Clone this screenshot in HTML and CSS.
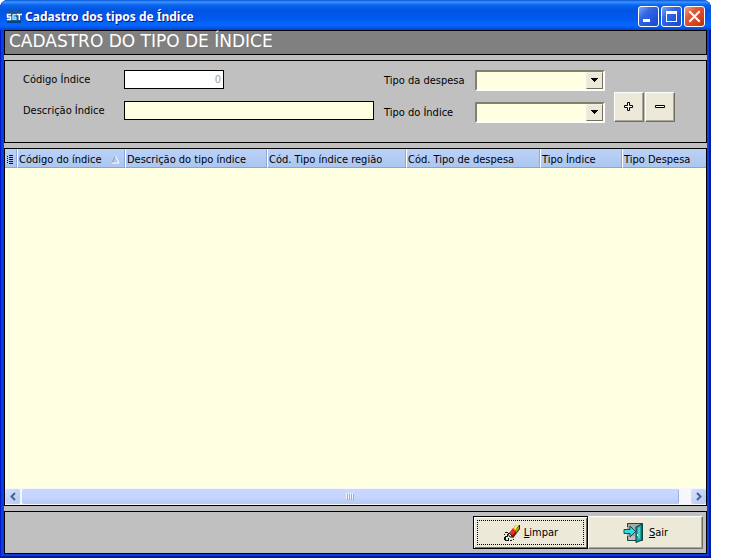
FILE: index.html
```html
<!DOCTYPE html>
<html lang="pt-BR">
  <head>
    <meta charset="UTF-8" />
    <meta name="viewport" content="width=device-width, initial-scale=1.0" />
    <title>Cadastro dos tipos de Índice</title>
    <link rel="stylesheet" href="styles.css" />
  </head>
  <body>
    <div class="window">
      <header class="titlebar">
        <svg class="app-icon" width="16" height="16" viewBox="0 0 16 16">
          <rect x="1" y="1" width="14" height="13" fill="#15579c" />
          <path d="M1 12h14v2H1z" fill="#0b3f86" />
          <path d="M8 4.500l2 2v3l-2 1.500l-2-1.500v-3z" fill="#4bb4ea" />
          <path d="M5 5.500H1.500v2.500H4.500v2.500H1" fill="none" stroke="#fff" stroke-width="1.500" />
          <path d="M10 5.500H7v5h3V8.500H8.500" fill="none" stroke="#b9e2fa" stroke-width="1.200" />
          <path d="M10.500 5.500H16M13.300 5.500V11" fill="none" stroke="#fff" stroke-width="1.500" />
        </svg>
        <h1>Cadastro dos tipos de Índice</h1>
        <div class="window-controls">
          <button type="button" class="control" aria-label="Minimizar">
            <svg width="19" height="19" viewBox="0 0 19 19">
              <path d="M4 12h7v3H4z" fill="#fff" />
            </svg>
          </button>
          <button type="button" class="control" aria-label="Maximizar">
            <svg width="19" height="19" viewBox="0 0 19 19">
              <path d="M4 4h11v11H4zM5 7v7h9V7z" fill="#fff" fill-rule="evenodd" />
            </svg>
          </button>
          <button type="button" class="control control-close" aria-label="Fechar">
            <svg width="19" height="19" viewBox="0 0 19 19">
              <path d="M5 5l9 9M14 5l-9 9" stroke="#fff" stroke-width="2" stroke-linecap="square" />
            </svg>
          </button>
        </div>
      </header>

      <main class="client">
        <h2 class="banner">CADASTRO DO TIPO DE ÍNDICE</h2>

        <form class="panel form-panel">
          <div class="fields">
            <label for="codigo">Código Índice</label>
            <input type="text" id="codigo" class="field field-code" value="0" readonly />
            <label for="descricao">Descrição Índice</label>
            <input type="text" id="descricao" class="field" />
          </div>
          <div class="combos">
            <label for="despesa">Tipo da despesa</label>
            <div class="combo">
              <select id="despesa">
                <option></option>
              </select>
              <span class="combo-arrow">
                <svg width="9" height="5" viewBox="0 0 9 5">
                  <path d="M1 0h7v1H7v1H6v1H5v1H4V3H3V2H2V1H1z" />
                </svg>
              </span>
            </div>
            <label for="tipo">Tipo do Índice</label>
            <div class="combo">
              <select id="tipo">
                <option></option>
              </select>
              <span class="combo-arrow">
                <svg width="9" height="5" viewBox="0 0 9 5">
                  <path d="M1 0h7v1H7v1H6v1H5v1H4V3H3V2H2V1H1z" />
                </svg>
              </span>
            </div>
          </div>
          <div class="row-actions">
            <button type="button" class="btn btn-square" aria-label="Adicionar">
              <svg width="10" height="10" viewBox="0 0 10 10">
                <path d="M3.500 .5h2v3h3v2h-3v3h-2v-3h-3v-2h3z" fill="#fff" stroke="#000" />
              </svg>
            </button>
            <button type="button" class="btn btn-square" aria-label="Remover">
              <svg width="10" height="10" viewBox="0 0 10 10">
                <path d="M.5 3.500h9v2H.5z" fill="#fff" stroke="#000" />
              </svg>
            </button>
          </div>
        </form>

        <section class="panel grid-panel">
          <table class="grid">
            <thead>
              <tr>
                <th class="col-marker">
                  <svg width="8" height="10" viewBox="0 0 8 10">
                    <path d="M1 1.500h1M3 .5h4M1 3.500h1M3 2.500h4M3 4.500h4M1 5.500h1M3 6.500h4M1 7.500h1M3 8.500h4" stroke="#111" />
                  </svg>
                </th>
                <th class="col-codigo">
                  <div class="sorted">
                    Código do índice
                    <svg width="9" height="9" viewBox="0 0 9 9">
                      <path d="M4.500 1L1 8" stroke="#8797b5" fill="none" />
                      <path d="M4.500 1L8 8H1" stroke="#fff" fill="none" />
                    </svg>
                  </div>
                </th>
                <th class="col-descricao">Descrição do tipo índice</th>
                <th class="col-regiao">Cód. Tipo índice região</th>
                <th class="col-despesa">Cód. Tipo de despesa</th>
                <th class="col-tipo">Tipo Índice</th>
                <th>Tipo Despesa</th>
              </tr>
            </thead>
            <tbody></tbody>
          </table>
          <div class="scrollbar">
            <button type="button" class="scroll-btn" aria-label="Rolar para a esquerda">
              <svg width="8" height="9" viewBox="0 0 8 9">
                <path d="M6 1L2.500 4.500L6 8" fill="none" stroke="#4d6185" stroke-width="2" />
              </svg>
            </button>
            <div class="scroll-thumb">
              <svg width="9" height="7" viewBox="0 0 9 7">
                <path d="M.5 0v6M2.500 0v6M4.500 0v6M6.500 0v6" stroke="#eef4fe" />
                <path d="M1.500 1v6M3.500 1v6M5.500 1v6M7.500 1v6" stroke="#8cb0f8" />
              </svg>
            </div>
            <button type="button" class="scroll-btn" aria-label="Rolar para a direita">
              <svg width="8" height="9" viewBox="0 0 8 9">
                <path d="M2 1L5.500 4.500L2 8" fill="none" stroke="#4d6185" stroke-width="2" />
              </svg>
            </button>
          </div>
        </section>

        <footer class="panel footer-panel">
          <button type="button" class="btn btn-wide btn-default">
            <svg width="18" height="18" viewBox="0 0 18 18">
              <path d="M6 10L13 1L17 1V5L10 14z" fill="#222" />
              <path d="M10 5L13 1H16L12 7z" fill="#ffef3a" />
              <path d="M11 8L16 2V5L12 10z" fill="#b8a000" />
              <path d="M6 9L10 4L13 7L9 12z" fill="#ef2b24" />
              <path d="M9 12L13 7V10L10 14z" fill="#8d1010" />
              <path d="M5 10L6 9L9 12V13H7z" fill="#fff" stroke="#111" />
              <path d="M2 8h3v1H2zM1 10h1v1H1zM4 10h1v3H4zM2 12h2v1H2zM1 13h2v3H1zM2 16h4v1H2zM5 14h1v2H5zM7 16h2v1H7zM10 15h1v1h-1z" fill="#111" />
            </svg>
            <span><u>L</u>impar</span>
          </button>
          <button type="button" class="btn btn-wide">
            <svg class="door" width="21" height="21" viewBox="0 0 21 21">
              <path d="M4 1h16v18H4z" fill="#a8a8a8" />
              <path d="M4.500 5V1.500H19.500V18.500H4.500V14" fill="none" stroke="#174848" />
              <path d="M6 14h6v4H6z" fill="#d2b9b9" />
              <path d="M13 5L19 2V18L13 20.500z" fill="#20a0a0" stroke="#083c3c" />
              <path d="M15 6L17 5V16L15 17z" fill="#54d0cc" />
              <path d="M1 7.500h6V4L12.500 9.500L7 15V11.500H1z" fill="#35dddd" stroke="#084f55" />
              <path d="M14 12h1v2h-1z" fill="#fff" />
            </svg>
            <span><u>S</u>air</span>
          </button>
        </footer>
      </main>
    </div>
  </body>
</html>
```

FILE: styles.css
```css
* {
  margin: 0;
  padding: 0;
  box-sizing: border-box;
}
body {
  font-family: Tahoma, "DejaVu Sans Condensed", "DejaVu Sans", sans-serif;
  font-size: 11px;
  line-height: 15px;
  color: #000;
  background-color: #fff;
  padding-right: 45px;
}
svg {
  display: block;
  flex-shrink: 0;
}
.window {
  display: flex;
  flex-direction: column;
  min-height: 100vh;
  padding: 0 4px 4px;
  background-color: #0a3fd8;
  border-radius: 8px 8px 0 0;
  box-shadow: inset 1px 0 #0019cf, inset -2px -2px #0019a8;
}

/* title bar */
.titlebar {
  display: flex;
  align-items: center;
  height: 30px;
  margin: 0 -4px;
  padding: 3px 6px 0;
  border-radius: 8px 8px 0 0;
  background: linear-gradient(
    #0753d8 0,
    #3b93ff 2px,
    #0a66ee 5px,
    #0054e3 10px,
    #0058ee 18px,
    #0568ff 25px,
    #0555e8 28px,
    #0340c4 30px
  );
}
.titlebar h1 {
  flex: 1;
  margin-left: 3px;
  font-family: "Trebuchet MS", "Noto Sans", sans-serif;
  font-size: 12px;
  line-height: 16px;
  font-weight: bold;
  color: #fff;
  text-shadow: 1px 1px #0a1883;
}
.window-controls {
  display: flex;
  gap: 2px;
}
.control {
  width: 21px;
  height: 21px;
  border: 1px solid #fff;
  border-radius: 3px;
  background: linear-gradient(135deg, #7ea4f4, #3367e6 35%, #2355da 70%, #1c49c4);
}
.control-close {
  background: linear-gradient(135deg, #f0a18c, #e0583a 35%, #d5431f 70%, #b5300e);
}

/* panels */
.client {
  flex: 1;
  display: flex;
  flex-direction: column;
  gap: 5px;
  background-color: #c0c0c0;
}
.banner {
  height: 25px;
  padding-left: 4px;
  border: 1px solid #000;
  background-color: #808080;
  color: #fff;
  font-family: Tahoma, "DejaVu Sans", sans-serif;
  font-size: 17px;
  line-height: 21px;
  font-weight: normal;
}
.panel {
  border: 1px solid #000;
}

/* form */
.form-panel {
  display: flex;
  align-items: flex-start;
  height: 83px;
  padding: 9px 18px;
}
.fields {
  display: grid;
  grid-template-columns: 101px 250px;
  gap: 12px 0;
  align-items: center;
}
.field {
  width: 100%;
  height: 19px;
  padding: 0 2px;
  border: 1px solid #000;
  background-color: #ffffe1;
  font: inherit;
}
.field-code {
  width: 100px;
  background-color: #fff;
  color: #a0a0a0;
  text-align: right;
}
.combos {
  display: grid;
  grid-template-columns: 91px 130px;
  gap: 11px 0;
  align-items: center;
  margin-left: 10px;
}
.combo {
  position: relative;
  height: 21px;
}
.combo select {
  width: 100%;
  height: 100%;
  appearance: none;
  border: 2px solid;
  border-color: #808074 #fff #fff #808074;
  border-radius: 0;
  background-color: #ffffe1;
  font: inherit;
}
.combo-arrow {
  position: absolute;
  top: 2px;
  right: 2px;
  bottom: 2px;
  width: 17px;
  display: flex;
  align-items: center;
  justify-content: center;
  border: 1px solid;
  border-color: #f1efe2 #716f64 #716f64 #f1efe2;
  background-color: #ece9d8;
  pointer-events: none;
}
.btn {
  display: flex;
  align-items: center;
  justify-content: center;
  border: 1px solid;
  border-color: #fff #716f64 #716f64 #fff;
  box-shadow: inset -1px -1px #aca899;
  background-color: #ece9d8;
  font: inherit;
  color: #000;
}
.row-actions {
  display: flex;
  gap: 1px;
  margin: 22px 0 0 9px;
}
.btn-square {
  width: 30px;
  height: 30px;
}

/* grid */
.grid-panel {
  flex: 1;
  display: flex;
  flex-direction: column;
  justify-content: space-between;
  background-color: #ffffe1;
}
.grid {
  width: 100%;
  table-layout: fixed;
  border-collapse: separate;
  border-spacing: 0;
}
.grid th {
  height: 19px;
  padding: 3px 0 0 1px;
  border-right: 1px solid #fff;
  border-bottom: 1px solid #86a5dc;
  box-shadow: inset -1px 0 #8ba9dc;
  background: linear-gradient(#bcd2f7, #abc6f0);
  font-weight: normal;
  text-align: left;
  white-space: nowrap;
}
.grid th:last-child {
  border-right: none;
  box-shadow: none;
}
.col-marker {
  width: 13px;
}
.col-codigo {
  width: 108px;
}
.col-descricao {
  width: 142px;
}
.col-regiao {
  width: 139px;
}
.col-despesa {
  width: 134px;
}
.col-tipo {
  width: 82px;
}
.sorted {
  display: flex;
  align-items: center;
  justify-content: space-between;
  padding-right: 5px;
}
.scrollbar {
  display: flex;
  gap: 2px;
  height: 17px;
  padding: 1px 0;
  background-color: #f6f6fb;
}
.scroll-btn {
  display: flex;
  align-items: center;
  justify-content: center;
  width: 15px;
  border: none;
  border-radius: 2px;
  background: linear-gradient(135deg, #d6e2fe, #b4c8f6);
}
.scroll-thumb {
  flex: 1;
  display: flex;
  align-items: center;
  justify-content: center;
  margin-right: 10px;
  border-right: 1px solid #9ab2e8;
  border-radius: 2px;
  background: linear-gradient(#c9d8fc, #c4d4fd 60%, #b6c8f6);
}

/* footer */
.footer-panel {
  display: flex;
  justify-content: flex-end;
  height: 43px;
  padding: 4px 3px 4px 0;
}
.btn-wide {
  gap: 3px;
  width: 115px;
  height: 33px;
}
.btn-wide .door {
  margin-right: 2px;
}
.btn-default {
  border-color: #000;
  box-shadow: inset 1px 1px #fff, inset -1px -1px #716f64;
  outline: 1px dotted #000;
  outline-offset: -5px;
}
```
